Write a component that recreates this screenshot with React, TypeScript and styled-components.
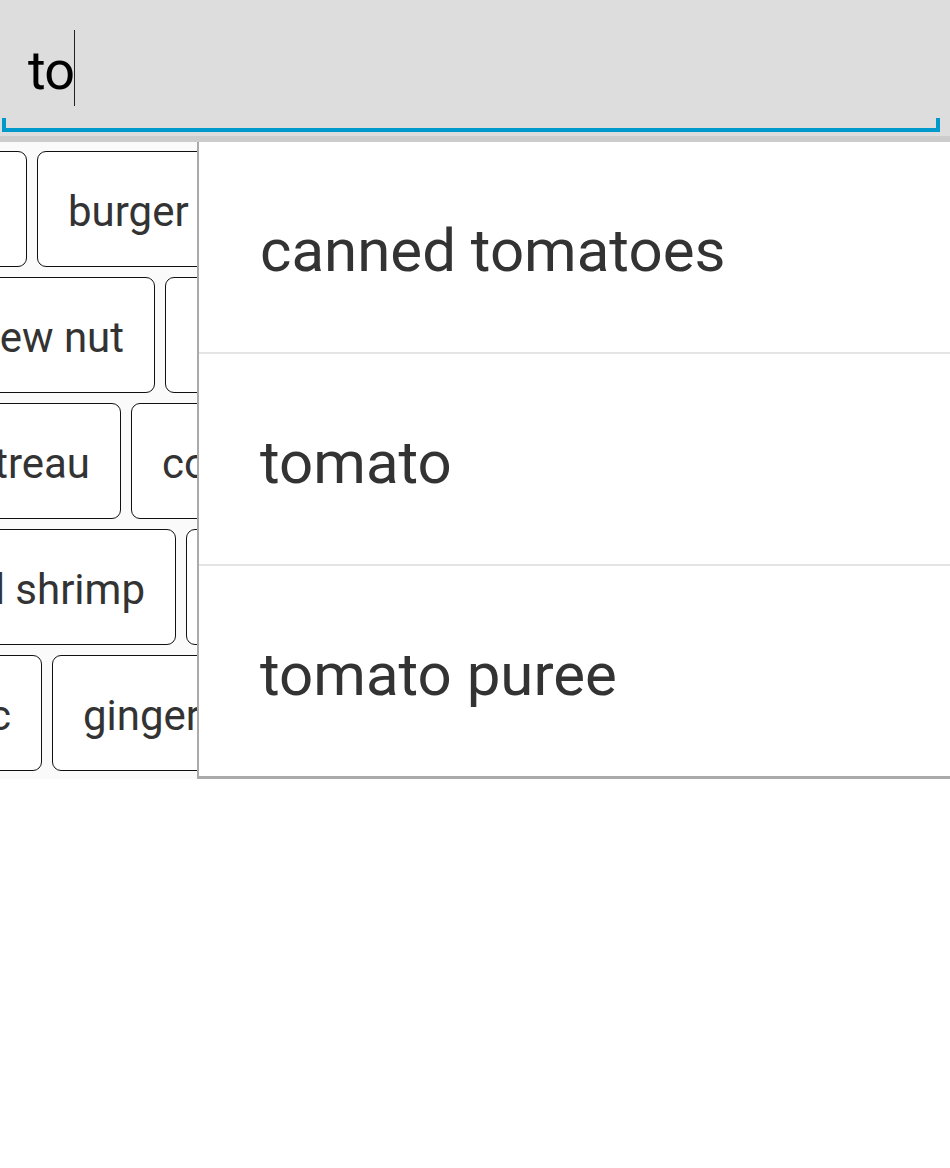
import styled, { createGlobalStyle } from 'styled-components';

const rows = [
  { lead: 27, first: 'bun', chips: ['burger', 'butter'] },
  { lead: 155, first: 'cashew nut', chips: ['cod', 'coriander'] },
  { lead: 121, first: 'cointreau', chips: ['coconut milk'] },
  { lead: 176, first: 'peeled shrimp', chips: ['cream'] },
  { lead: 42, first: 'garlic', chips: ['ginger', 'honey'] },
];

const suggestions = ['canned tomatoes', 'tomato', 'tomato puree'];

function App() {
  return (
    <Page>
      <GlobalStyle />
      <SearchBar>
        <InputText>
          <span>to</span>
          <Caret />
        </InputText>
        <Underline />
      </SearchBar>
      <Body>
        <ChipGrid>
          {rows.map((row) => (
            <ChipRow key={row.first}>
              <Lead $width={row.lead}>
                <Chip>{row.first}</Chip>
              </Lead>
              {row.chips.map((c) => (
                <Chip key={c}>{c}</Chip>
              ))}
            </ChipRow>
          ))}
        </ChipGrid>
        <Dropdown>
          {suggestions.map((s) => (
            <Item key={s}>{s}</Item>
          ))}
        </Dropdown>
      </Body>
    </Page>
  );
}

const GlobalStyle = createGlobalStyle`
  html, body {
    margin: 0;
    padding: 0;
    background: #ffffff;
    font-family: Roboto, "Noto Sans", sans-serif;
  }
`;

const Page = styled.div`
  width: 950px;
  min-height: 1168px;
  overflow: hidden;
  background: #ffffff;
`;

const SearchBar = styled.div`
  height: 132px;
  padding: 0 10px 4px 2px;
  background: #dddddd;
  border-bottom: 6px solid #cccccc;
  display: flex;
  flex-direction: column;
  justify-content: flex-end;
`;

const InputText = styled.div`
  display: flex;
  align-items: center;
  height: 72px;
  margin-bottom: 14px;
  padding-left: 26px;
  font-size: 54px;
  color: #000000;
  letter-spacing: -1px;

  span {
    padding-top: 4px;
  }
`;

const Caret = styled.span`
  display: inline-block;
  width: 1px;
  height: 72px;
  background: #222222;
`;

const Underline = styled.div`
  width: 930px;
  height: 10px;
  border: 4px solid #0099cc;
  border-top: none;
`;

const Body = styled.div`
  position: relative;
`;

const ChipGrid = styled.div`
  display: flex;
  flex-direction: column;
  gap: 10px;
  padding: 9px 0 8px;
  background: #fafafa;
  overflow: hidden;
`;

const ChipRow = styled.div`
  display: flex;
  gap: 10px;
`;

const Lead = styled.div<{ $width: number }>`
  flex: 0 0 ${(p) => p.$width}px;
  display: flex;
  justify-content: flex-end;
  overflow: hidden;
`;

const Chip = styled.div`
  flex: 0 0 auto;
  height: 114px;
  box-sizing: border-box;
  height: 116px;
  display: flex;
  align-items: center;
  padding: 4px 30px 0;
  background: #ffffff;
  border: 1px solid #111111;
  border-radius: 9px;
  font-size: 42px;
  color: #333333;
  white-space: nowrap;
`;

const Dropdown = styled.div`
  position: absolute;
  top: 0;
  left: 197px;
  right: 0;
  background: #ffffff;
  border-left: 2px solid #aaaaaa;
  border-bottom: 3px solid #aaaaaa;
`;

const Item = styled.div`
  height: 210px;
  box-sizing: border-box;
  display: flex;
  align-items: center;
  padding: 6px 0 0 61px;
  font-size: 60px;
  color: #333333;

  & + & {
    height: 212px;
    border-top: 2px solid #e4e4e4;
  }
`;

export default App;
